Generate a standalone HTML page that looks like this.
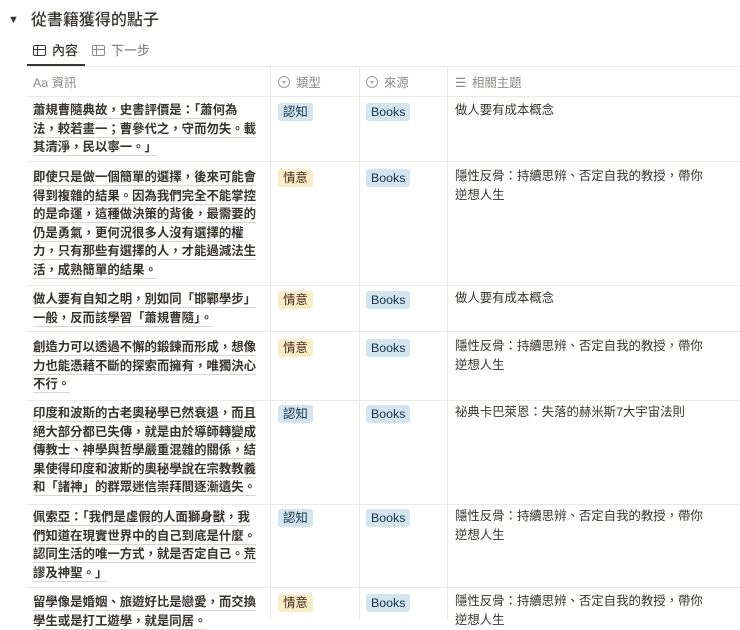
<!DOCTYPE html>
<html><head><meta charset="utf-8"><style>
*{margin:0;padding:0;box-sizing:border-box}
body{width:740px;height:619px;overflow:hidden;background:#fff;font-family:"Liberation Sans","Noto Sans CJK TC",sans-serif;color:#37352f;position:relative}
.title{position:absolute;left:8px;top:6px;font-size:16px;font-weight:500;color:#37352f}
.title span{font-size:11px;margin-right:12px;display:inline-block;vertical-align:2px}
.tabs{position:absolute;left:27px;top:40px;height:26px;font-size:13px}
.tab{position:absolute;top:0;white-space:nowrap;font-weight:500}
.tabline{position:absolute;left:27px;top:64px;width:58px;height:2px;background:#37352f}
.ti{display:inline-block;width:13px;height:11px;border:1.5px solid currentColor;border-radius:2px;vertical-align:-1px;margin-right:6px;position:relative}
.ti:before{content:"";position:absolute;left:0;right:0;top:2.5px;border-top:1.5px solid currentColor}
.ti:after{content:"";position:absolute;left:3px;top:0;bottom:0;border-left:1.5px solid currentColor}
.hline{position:absolute;left:27px;right:0;border-top:1px solid #e9e9e7}
.vline{position:absolute;top:66px;bottom:0;border-left:1px solid #e9e9e7}
.hd{position:absolute;top:73px;font-size:12.4px;color:#8c8b88;white-space:nowrap}
.cell{position:absolute;font-size:12.4px;line-height:18.5px;white-space:nowrap}
.info{left:33px;font-weight:600;color:#37352f}
.info span{text-decoration:underline;text-decoration-color:#d6d6d3;text-underline-offset:4px;text-decoration-thickness:1px}
.tag{position:absolute;font-size:12.4px;line-height:18px;padding:0 5px;border-radius:3px}
.blue{background:#d3e5ef;color:#183347}
.yel{background:#fbecc8;color:#402c1b}
.topic{left:455px;color:#37352f}
.circ{display:inline-block;width:12px;height:12px;border:1.2px solid #9b9a97;border-radius:50%;vertical-align:-1px;margin-right:6px;position:relative}
.circ:after{content:"";position:absolute;left:2.5px;top:3.5px;border-left:2.5px solid transparent;border-right:2.5px solid transparent;border-top:3px solid #9b9a97}
</style></head><body>
<div class="title"><span>▼</span>從書籍獲得的點子</div>
<div class="tabs">
<div class="tab" style="left:6px;color:#37352f"><i class="ti"></i>內容</div>
<div class="tab" style="left:65px;color:#8c8b88"><i class="ti"></i>下一步</div>
</div>
<div class="tabline"></div>
<div class="hline" style="top:66px"></div>
<div class="hline" style="top:96px"></div>
<div class="hline" style="top:161px"></div>
<div class="hline" style="top:285px"></div>
<div class="hline" style="top:331px"></div>
<div class="hline" style="top:400px"></div>
<div class="hline" style="top:504px"></div>
<div class="hline" style="top:587px"></div>
<div class="vline" style="left:270px"></div>
<div class="vline" style="left:359px"></div>
<div class="vline" style="left:447px"></div>
<div class="hd" style="left:33px">Aa 資訊</div>
<div class="hd" style="left:278px"><i class="circ"></i>類型</div>
<div class="hd" style="left:366px"><i class="circ"></i>來源</div>
<div class="hd" style="left:455px"><span style="letter-spacing:-1px">☰</span>&nbsp; 相關主題</div>

<div class="cell info" style="top:101px"><span>蕭規曹隨典故，史書評價是：「蕭何為<br>法，較若畫一；曹參代之，守而勿失。載<br>其清淨，民以寧一。」</span></div>
<div class="tag blue" style="left:278px;top:103px">認知</div>
<div class="tag blue" style="left:366px;top:103px">Books</div>
<div class="cell topic" style="top:101px">做人要有成本概念</div>

<div class="cell info" style="top:168px"><span>即使只是做一個簡單的選擇，後來可能會<br>得到複雜的結果。因為我們完全不能掌控<br>的是命運，這種做決策的背後，最需要的<br>仍是勇氣，更何況很多人沒有選擇的權<br>力，只有那些有選擇的人，才能過減法生<br>活，成熟簡單的結果。</span></div>
<div class="tag yel" style="left:278px;top:169px">情意</div>
<div class="tag blue" style="left:366px;top:169px">Books</div>
<div class="cell topic" style="top:167px">隱性反骨：持續思辨、否定自我的教授，帶你<br>逆想人生</div>

<div class="cell info" style="top:290px"><span>做人要有自知之明，別如同「邯鄲學步」<br>一般，反而該學習「蕭規曹隨」。</span></div>
<div class="tag yel" style="left:278px;top:291px">情意</div>
<div class="tag blue" style="left:366px;top:291px">Books</div>
<div class="cell topic" style="top:289px">做人要有成本概念</div>

<div class="cell info" style="top:338px"><span>創造力可以透過不懈的鍛鍊而形成，想像<br>力也能憑藉不斷的探索而擁有，唯獨決心<br>不行。</span></div>
<div class="tag yel" style="left:278px;top:339px">情意</div>
<div class="tag blue" style="left:366px;top:339px">Books</div>
<div class="cell topic" style="top:337px">隱性反骨：持續思辨、否定自我的教授，帶你<br>逆想人生</div>

<div class="cell info" style="top:404px"><span>印度和波斯的古老奧秘學已然衰退，而且<br>絕大部分都已失傳，就是由於導師轉變成<br>傳教士、神學與哲學嚴重混雜的關係，結<br>果使得印度和波斯的奧秘學說在宗教教義<br>和「諸神」的群眾迷信崇拜間逐漸遺失。</span></div>
<div class="tag blue" style="left:278px;top:405px">認知</div>
<div class="tag blue" style="left:366px;top:405px">Books</div>
<div class="cell topic" style="top:403px">祕典卡巴萊恩：失落的赫米斯7大宇宙法則</div>

<div class="cell info" style="top:508px"><span>佩索亞：「我們是虛假的人面獅身獸，我<br>們知道在現實世界中的自己到底是什麼。<br>認同生活的唯一方式，就是否定自己。荒<br>謬及神聖。」</span></div>
<div class="tag blue" style="left:278px;top:509px">認知</div>
<div class="tag blue" style="left:366px;top:509px">Books</div>
<div class="cell topic" style="top:507px">隱性反骨：持續思辨、否定自我的教授，帶你<br>逆想人生</div>

<div class="cell info" style="top:593px"><span>留學像是婚姻、旅遊好比是戀愛，而交換<br>學生或是打工遊學，就是同居。</span></div>
<div class="tag yel" style="left:278px;top:594px">情意</div>
<div class="tag blue" style="left:366px;top:594px">Books</div>
<div class="cell topic" style="top:592px">隱性反骨：持續思辨、否定自我的教授，帶你<br>逆想人生</div>
</body></html>
